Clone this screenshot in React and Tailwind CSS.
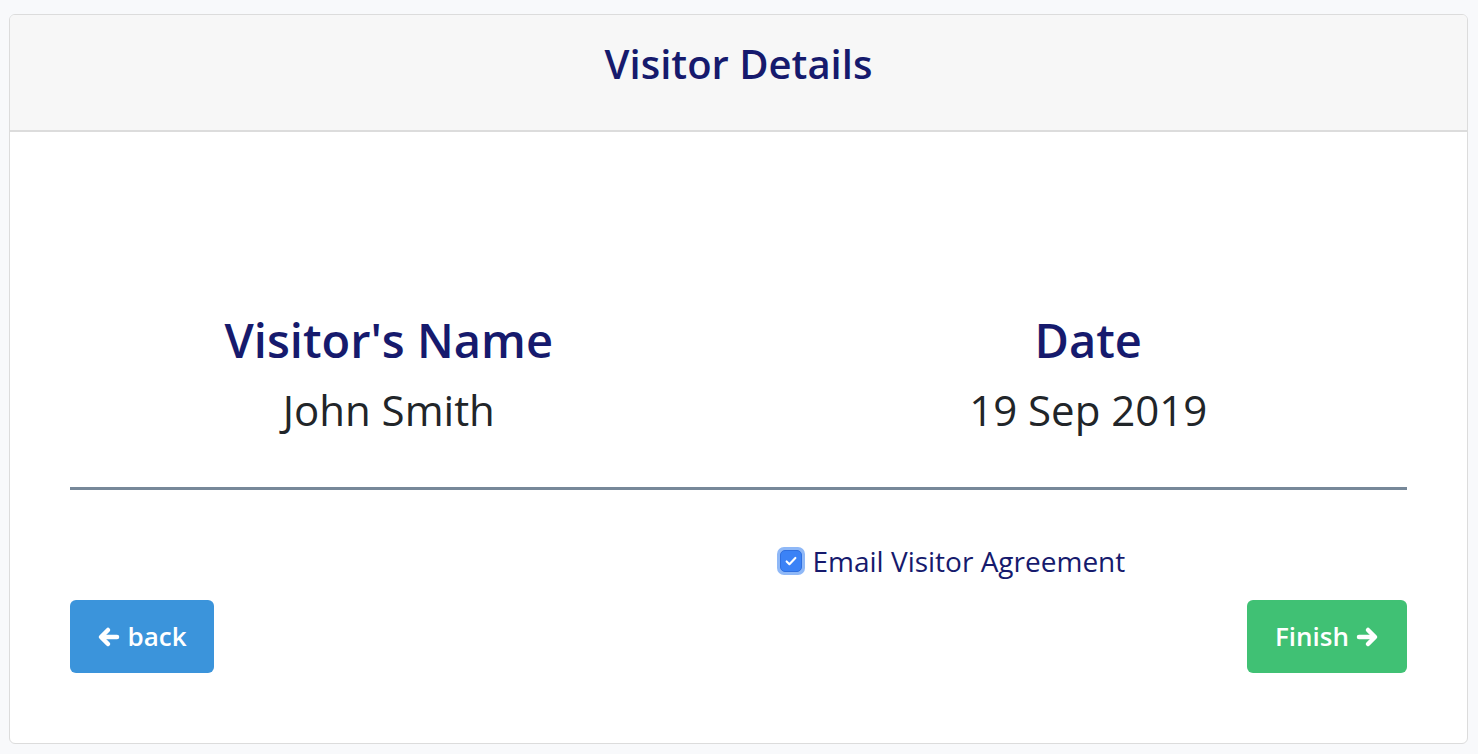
import React from "react";

function ArrowLeft() {
  return (
    <svg width="24" height="24" viewBox="0 0 24 24" fill="none" stroke="white" strokeWidth="4.5" strokeLinecap="round" strokeLinejoin="round">
      <path d="M20 12H5" />
      <path d="M11 5l-7 7 7 7" />
    </svg>
  );
}
function ArrowRight() {
  return (
    <svg width="24" height="24" viewBox="0 0 24 24" fill="none" stroke="white" strokeWidth="4.5" strokeLinecap="round" strokeLinejoin="round">
      <path d="M4 12h15" />
      <path d="M13 5l7 7-7 7" />
    </svg>
  );
}

export default function App() {
  return (
    <div className="min-h-[754px] w-full bg-[#f8f9fb] pt-[14px] pl-[9px] pr-[10px] pb-[11px]" style={{ fontFamily: "'Open Sans', Lato, sans-serif" }}>
      <div className="rounded-[6px] border border-[#dcdcdc] bg-white overflow-hidden">
        <div className="h-[117px] bg-[#f7f7f7] border-b-2 border-[#dcdcdc] flex items-center justify-center">
          <h1 className="text-[40px] font-semibold text-[#161a6d] leading-none -mt-[18px]">Visitor Details</h1>
        </div>
        <div className="px-[60px] pt-[180px] pb-[70px]">
          <div className="flex -mx-[31px]">
            <div className="w-1/2 flex flex-col items-center">
              <div className="text-[47px] font-semibold text-[#161a6d] leading-[56px]">Visitor's Name</div>
              <div className="text-[42px] text-[#212529] leading-[56px] mt-[14px]">John Smith</div>
            </div>
            <div className="w-1/2 flex flex-col items-center">
              <div className="text-[47px] font-semibold text-[#161a6d] leading-[56px]">Date</div>
              <div className="text-[42px] text-[#212529] leading-[56px] mt-[14px]">19 Sep 2019</div>
            </div>
          </div>
          <div className="h-[3px] bg-[#778899] mt-[49px]" />
          <div className="flex mt-[57px]">
            <div className="w-1/2" />
            <label className="flex items-center gap-[8px] ml-[38px]">
              <span className="w-[28px] h-[28px] rounded-[7px] bg-[#8fb8f7] flex items-center justify-center">
                <span className="w-[22px] h-[22px] rounded-[5px] bg-[#3b82f6] border border-[#2f6fe0] flex items-center justify-center">
                  <svg width="14" height="14" viewBox="0 0 16 16" fill="none" stroke="white" strokeWidth="2.4" strokeLinecap="round" strokeLinejoin="round">
                    <path d="M3 8.5l3.2 3.2L13 4.5" />
                  </svg>
                </span>
              </span>
              <span className="text-[28px] text-[#161a6d] leading-none">Email Visitor Agreement</span>
            </label>
          </div>
          <div className="flex justify-between mt-[25px]">
            <button className="h-[73px] w-[144px] rounded-[6px] bg-[#3b94db] text-white text-[26px] font-semibold flex items-center justify-center gap-[6px]">
              <ArrowLeft />
              <span>back</span>
            </button>
            <button className="h-[73px] w-[160px] rounded-[6px] bg-[#40c174] text-white text-[26px] font-semibold flex items-center justify-center gap-[6px]">
              <span>Finish</span>
              <ArrowRight />
            </button>
          </div>
        </div>
      </div>
    </div>
  );
}
